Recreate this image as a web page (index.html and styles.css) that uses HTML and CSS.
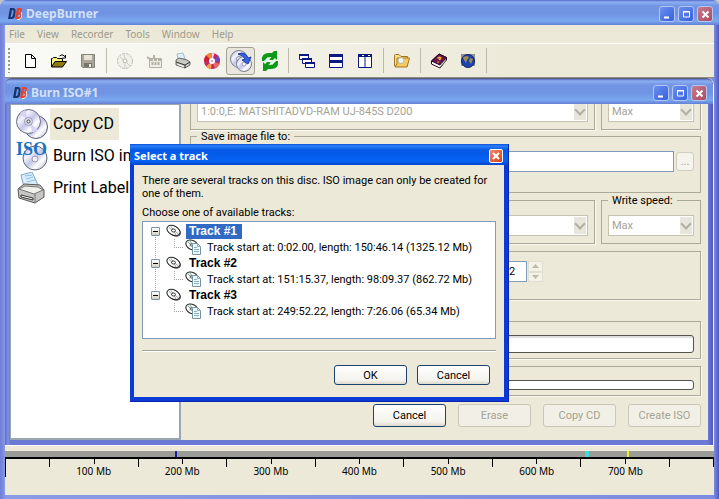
FILE: index.html
```
<!DOCTYPE html>
<html lang="en">

<head>
    <meta charset="UTF-8">
    <meta name="viewport" content="width=device-width, initial-scale=1.0">
    <title>DeepBurner</title>
    <link rel="stylesheet" href="styles.css">
</head>

<body>

    <!-- shared shapes -->
    <svg class="defs" width="0" height="0" aria-hidden="true">
        <defs>
            <linearGradient id="silver" x1="0" y1="0" x2="1" y2="1">
                <stop offset="0" stop-color="#9aa0b8" />
                <stop offset=".3" stop-color="#f4f4ff" />
                <stop offset=".5" stop-color="#c3c6e6" />
                <stop offset=".7" stop-color="#fff" />
                <stop offset="1" stop-color="#a4a8c0" />
            </linearGradient>
        </defs>
        <symbol id="logo" viewBox="0 0 15 14">
            <path d="M2 13h9l3-3V3L9 13z" fill="#fff" />
            <path fill="#14366e" fill-rule="evenodd" d="M2 1h3q3 0 2.500 4L7 9q-.5 3-3.500 3H0zm2 2L2.700 10h.8q1.200 0 1.500-2l.6-3q.3-2-1-2z" />
            <path fill="#e8402a" fill-rule="evenodd" d="M9 1h3q2.500 0 2 3-.3 1.700-1.500 2.200 1.200.8.800 2.600Q12.800 12 10 12H7zm2 2-.4 2.500h.6q1 0 1.100-1.300.1-1.200-.8-1.200zm-.8 4.200L9.700 10h.8q1 0 1.200-1.400.1-1.400-.9-1.400z" />
        </symbol>
        <symbol id="track" viewBox="0 0 16 14">
            <ellipse cx="8.500" cy="7.500" rx="7" ry="4.500" transform="rotate(28 8.500 7.500)" fill="#777" />
            <ellipse cx="7.500" cy="6.500" rx="7" ry="4.500" transform="rotate(28 7.500 6.500)" fill="#fff" stroke="#222" />
            <path d="M3 3.500 6 6M9.500 7.500l3 2.500M5 2.500l2 3M8.500 8l1.500 3" stroke="#8aa49a" />
            <ellipse cx="7.500" cy="6.500" rx="2" ry="1.500" fill="#fff" stroke="#333" />
        </symbol>
        <symbol id="trackinfo" viewBox="0 0 17 16">
            <ellipse cx="7" cy="6" rx="6.500" ry="4.500" transform="rotate(28 7 6)" fill="#fff" stroke="#222" />
            <path d="M3 3l3 2.500M5 2l2 3" stroke="#7a9a90" />
            <ellipse cx="6.500" cy="6" rx="1.500" ry="1" fill="#fff" stroke="#444" />
            <path d="M7.500 4.500h5l3 3v8h-8z" fill="#eef8fa" stroke="#7396a2" />
            <path d="M12.500 4.500v3h3M9 8.500h3M9 10.500h5M9 12.500h5" fill="none" stroke="#8cb0c2" />
        </symbol>
    </svg>

    <div class="app">
        <header class="titlebar">
            <svg class="logo" width="15" height="14"><use href="#logo" /></svg>
            <h1>DeepBurner</h1>
            <button class="cap" aria-label="Minimize"><svg width="15" height="15"><path d="M4 10.500h5" stroke="#fff" stroke-width="2" /></svg></button>
            <button class="cap" aria-label="Maximize"><svg width="15" height="15"><path d="M4.500 5h6v5h-6zM4 4.500h7" fill="none" stroke="#fff" /></svg></button>
            <button class="cap close" aria-label="Close"><svg width="15" height="15"><path d="m4.500 4.500 6 6m0-6-6 6" stroke="#fff" stroke-width="2" /></svg></button>
        </header>

        <nav class="menu">
            <a href="#">File</a>
            <a href="#">View</a>
            <a href="#">Recorder</a>
            <a href="#">Tools</a>
            <a href="#">Window</a>
            <a href="#">Help</a>
        </nav>

        <div class="toolbar">
            <span class="grip"></span>
            <button aria-label="New"><svg width="16" height="16"><path d="M3.500 1.500h6l4 4v9h-10z" fill="#fff" stroke="#000" /><path d="M9.500 1.500v4h4" fill="none" stroke="#000" /></svg></button>
            <button aria-label="Open"><svg width="18" height="16"><path d="M1.500 14V5.500h1l1-1h3l1 1h5V9" fill="#f7ef8a" stroke="#000" /><path d="M1.500 14 5 8.500h11.500L12.500 14z" fill="#8c7c10" stroke="#000" /><path d="M9.500 3q2.500-2.500 5 0l1 1.500M15.500 2v3h-3" fill="none" stroke="#000" /></svg></button>
            <button aria-label="Save" disabled><svg width="16" height="16"><path d="M1.500 1.500h13v13h-12l-1-1z" fill="#a9a79c" stroke="#85847a" /><path d="M4 2h8v5H4z" fill="#e6e3d6" /><path d="M4 10h8v4H4z" fill="#77766e" /><path d="M9 11h2v3H9z" fill="#eee" /></svg></button>
            <span class="sep"></span>
            <button aria-label="Burn disc" disabled><svg width="18" height="18"><circle cx="9" cy="9" r="7.500" fill="#f2f0ea" stroke="#bcb9af" stroke-dasharray="3 1" /><circle cx="9" cy="9" r="2" fill="#fff" stroke="#b3b0a6" /><path d="M4 5l3 2.500M8 3l1 3M11 11l3 3M9 12v4" stroke="#ccc9bf" /></svg></button>
            <button aria-label="Erase disc" disabled><svg width="18" height="16"><path d="M4.500 5.500h12v9h-12z" fill="#f0ede4" stroke="#b3b0a6" /><path d="M5 7h11M7.500 9v4M10.500 9v4M13.500 9v4M2 4l3 2M9 2v3" stroke="#b3b0a6" stroke-width="2" stroke-dasharray="3 1" /></svg></button>
            <button aria-label="Print label"><svg width="18" height="18"><path d="M4 7 3 2l6-1 2 6z" fill="#dff0fb" stroke="#9dbfd4" /><path d="m2 8 3-2 8 2 3 2v3l-5 3-9-3z" fill="#c9c9c6" stroke="#666" /><path d="m2 10 9 3 5-3M11 13v3" fill="none" stroke="#333" /><path d="M4 12.500 10 15" stroke="#fff" /></svg></button>
            <button aria-label="Disc information"><svg width="18" height="18"><circle cx="9" cy="9" r="8" fill="#c02860" /><path d="M9 9 3 3.500A8 8 0 0 1 9 1z" fill="#ef8a30" /><path d="M9 9 1 9a8 8 0 0 1 2-5.500z" fill="#d02030" /><path d="m9 9 6-5.500A8 8 0 0 1 17 10z" fill="#7a48b8" /><path d="m9 9 3 7.500A8 8 0 0 0 16.500 12z" fill="#e86868" /><path d="m9 9-6 5.500A8 8 0 0 0 8 17z" fill="#f2a04a" /><path d="M9 9V1l2.500.4z" fill="#f8d0e8" /><circle cx="9" cy="9" r="3" fill="#fff" /><circle cx="9" cy="9" r="1" fill="#b9a" /></svg></button>
            <button class="on" aria-label="Copy disc"><svg width="24" height="22"><circle cx="10" cy="9" r="8.500" fill="url(#silver)" stroke="#777c94" /><circle cx="10" cy="9" r="2.500" fill="#fff" stroke="#8a8fae" /><circle cx="15" cy="14" r="7.500" fill="url(#silver)" stroke="#777c94" /><circle cx="15" cy="14" r="2" fill="#fff" stroke="#9a9fbe" /><path d="M9 4q7-3 10 4l3-1-3 7-6-4 3-1Q14 5 9 4z" fill="#3b62dd" stroke="#1e3fb0" /></svg></button>
            <button aria-label="Refresh"><svg width="18" height="22"><path d="M1 11Q0 3 8 3h3l2-2h3v9H8l2.500-3Q5 7 5 11z" fill="#0e9a18" /><path d="M17 11q1 8-7 8H7l-2 2H2v-9h8l-2.500 3q5.500 0 5.500-4z" fill="#0e9a18" /><path d="m3 13 5-5M10 14l5-5" stroke="#e4f4e6" stroke-width="3" /></svg></button>
            <span class="sep"></span>
            <button aria-label="Cascade"><svg width="16" height="16"><g fill="#fff" stroke="#0a1a80"><path d="M.5 1.500h9v5h-9z" /><path d="M3.500 5.500h9v5h-9z" /><path d="M6.500 9.500h9v5h-9z" /><path d="M0 2h10M3 6h10M6 10h10" stroke-width="2" /></g></svg></button>
            <button aria-label="Tile horizontally"><svg width="14" height="14"><g fill="#fff" stroke="#0a1a80"><path d="M.5.500h13v13H.5z" /><path d="M0 1.500h14M0 7.500h14" stroke-width="3" /></g></svg></button>
            <button aria-label="Tile vertically"><svg width="14" height="14"><g fill="#fff" stroke="#0a1a80"><path d="M.5.500h13v13H.5zM7 0v14" /><path d="M0 1.500h14" stroke-width="3" /></g><path d="M4 1.500h2M10 1.500h2" stroke="#fff" /></svg></button>
            <span class="sep"></span>
            <button aria-label="Browse"><svg width="18" height="16"><path d="M1.500 13V2.500q0-1 1-1H6l2 2h6.500V13z" fill="#fbe08a" stroke="#a8741c" /><path d="m2 14 2-3V5h12.500L14 14z" fill="#f6cc62" stroke="#a8741c" /><circle cx="8" cy="7.500" r="3" fill="#eefaf8" stroke="#b0b8a0" /></svg></button>
            <span class="sep"></span>
            <button aria-label="Help contents"><svg width="18" height="18"><path d="M1.500 9 9 2l7.500 3.500V8L10 16l-8.500-4z" fill="#fff" stroke="#26051c" /><path d="M1.500 9 9 2l7.500 3.500L10 13z" fill="#6c1450" stroke="#26051c" /><path d="M10 13.500 16 7M10 15.500 16 8.500" stroke="#777" /><path d="M7.500 6.500q1.500-2 3-1 .5 1-1.500 2.500M8 9.500v1.200" fill="none" stroke="#f3c01c" stroke-width="1.500" /></svg></button>
            <button aria-label="Web site"><svg width="16" height="16"><path d="M1 1h14v12H1z" fill="#8d9096" /><circle cx="8" cy="8" r="6.500" fill="#1c45b4" stroke="#10255e" /><path d="m3 4 4-1 2 1-2 3-1 3-2-3zM10 5l3 1-2 5-2-3z" fill="#a08a4c" /></svg></button>
            <span class="sep"></span>
        </div>

        <div class="child">
            <header class="titlebar">
                <svg class="logo" width="15" height="14"><use href="#logo" /></svg>
                <h2>Burn ISO#1</h2>
                <button class="cap" aria-label="Minimize"><svg width="15" height="15"><path d="M4 10.500h5" stroke="#fff" stroke-width="2" /></svg></button>
                <button class="cap" aria-label="Maximize"><svg width="15" height="15"><path d="M4.500 5h6v5h-6zM4 4.500h7" fill="none" stroke="#fff" /></svg></button>
                <button class="cap close" aria-label="Close"><svg width="15" height="15"><path d="m4.500 4.500 6 6m0-6-6 6" stroke="#fff" stroke-width="2" /></svg></button>
            </header>

            <div class="work">
                <ul class="tasks">
                    <li>
                        <svg width="32" height="32"><circle cx="20" cy="19" r="11.500" fill="url(#silver)" stroke="#555a6e" /><circle cx="12.500" cy="13.500" r="12" fill="url(#silver)" stroke="#686d84" /><path d="M12.500 13.500 4 5l5-3zM12.500 13.500 17 25l5-3z" fill="#d6d2fa" /><circle cx="12.500" cy="13.500" r="4" fill="#dcdcec" stroke="#9a9db8" /><circle cx="12.500" cy="13.500" r="1.500" fill="#fff" stroke="#444" /></svg>
                        <a href="#" class="current">Copy CD</a>
                    </li>
                    <li>
                        <svg width="32" height="32"><circle cx="19" cy="18" r="12" fill="url(#silver)" stroke="#60657c" /><circle cx="19" cy="19" r="3" fill="#eee" stroke="#9a9db8" /><text class="iso" x="0" y="15">ISO</text></svg>
                        <a href="#">Burn ISO image</a>
                    </li>
                    <li>
                        <svg width="32" height="32"><path d="M8 15 5 3l11-3 6 13z" fill="#d9efff" stroke="#7fa4c4" /><path d="m9 4 7-1M10 7l7-2M11 10l8-2" stroke="#8bbbe4" /><path d="m2 17 6-5 16 1 4 5v7l-9 6L3 26z" fill="#c6c6c2" stroke="#555" /><path d="m3 17 6-3 13 1 5 3-9 4z" fill="#f0f0ec" stroke="#777" /><path d="M19 22v9" stroke="#777" /><path d="M5 23v2l12 3v-2z" fill="#fff" stroke="#333" /></svg>
                        <a href="#">Print Label</a>
                    </li>
                </ul>

                <main class="panel">
                    <div class="row">
                        <div class="group wide"><select disabled aria-label="Source drive"><option>1:0:0,E: MATSHITADVD-RAM UJ-845S D200</option></select></div>
                        <div class="group narrow"><select disabled aria-label="Read speed"><option>Max</option></select></div>
                    </div>
                    <fieldset class="group titled file">
                        <legend><label for="file">Save image file to:</label></legend>
                        <div class="filerow">
                            <input id="file" type="text">
                            <button class="browse" disabled>...</button>
                        </div>
                    </fieldset>
                    <div class="row">
                        <div class="group wide"><select disabled aria-label="Target drive"><option></option></select></div>
                        <fieldset class="group narrow titled">
                            <legend><label for="wspeed">Write speed:</label></legend>
                            <select id="wspeed" disabled><option>Max</option></select>
                        </fieldset>
                    </div>
                    <div class="group copies">
                        <input type="text" value="2" aria-label="Copies">
                        <span class="spin">
                            <button disabled aria-label="More"><svg width="7" height="4"><path d="M0 4 3.500 0 7 4z" fill="#bdbaaa" /></svg></button>
                            <button disabled aria-label="Fewer"><svg width="7" height="4"><path d="M0 0h7L3.500 4z" fill="#bdbaaa" /></svg></button>
                        </span>
                    </div>
                    <div class="group total"><div class="bar big" role="progressbar" aria-label="Progress"></div></div>
                    <div class="group"><div class="bar" role="progressbar" aria-label="Buffer"></div></div>
                    <div class="actions">
                        <button class="btn">Cancel</button>
                        <button class="btn" disabled>Erase</button>
                        <button class="btn" disabled>Copy CD</button>
                        <button class="btn" disabled>Create ISO</button>
                    </div>
                </main>
            </div>
        </div>

        <footer class="meter">
            <div class="used">
                <i class="navy" style="left: 24%"></i>
                <i class="cyan" style="left: 81.8%"></i>
                <i class="yellow" style="left: 87.7%"></i>
            </div>
            <div class="ticks">
                <i></i><i></i><i></i><i></i><i></i><i></i><i></i><i></i>
                <i></i><i></i><i></i><i></i><i></i><i></i><i></i><i></i>
            </div>
            <div class="scale">
                <span>100 Mb</span>
                <span>200 Mb</span>
                <span>300 Mb</span>
                <span>400 Mb</span>
                <span>500 Mb</span>
                <span>600 Mb</span>
                <span>700 Mb</span>
            </div>
        </footer>
    </div>

    <div class="dialog" role="dialog" aria-labelledby="dlgtitle">
        <header>
            <h2 id="dlgtitle">Select a track</h2>
            <button class="cap close" aria-label="Close"><svg width="12" height="12"><path d="m3 3 6 6m0-6-6 6" stroke="#fff" stroke-width="2" /></svg></button>
        </header>
        <div class="content">
            <p>There are several tracks on this disc. ISO image can only be created for<br>one of them.</p>
            <p class="choose">Choose one of available tracks:</p>
            <ul class="tree">
                <li>
                    <div class="node"><button class="fold" aria-label="Collapse"></button><svg width="16" height="14"><use href="#track" /></svg><b class="selected">Track #1</b></div>
                    <div class="leaf"><svg width="17" height="16"><use href="#trackinfo" /></svg><span>Track start at: 0:02.00, length: 150:46.14 (1325.12 Mb)</span></div>
                </li>
                <li>
                    <div class="node"><button class="fold" aria-label="Collapse"></button><svg width="16" height="14"><use href="#track" /></svg><b>Track #2</b></div>
                    <div class="leaf"><svg width="17" height="16"><use href="#trackinfo" /></svg><span>Track start at: 151:15.37, length: 98:09.37 (862.72 Mb)</span></div>
                </li>
                <li>
                    <div class="node"><button class="fold" aria-label="Collapse"></button><svg width="16" height="14"><use href="#track" /></svg><b>Track #3</b></div>
                    <div class="leaf"><svg width="17" height="16"><use href="#trackinfo" /></svg><span>Track start at: 249:52.22, length: 7:26.06 (65.34 Mb)</span></div>
                </li>
            </ul>
            <hr>
            <div class="buttons">
                <button class="btn">OK</button>
                <button class="btn">Cancel</button>
            </div>
        </div>
    </div>

</body>

</html>
```
FILE: styles.css
```
* {
    box-sizing: border-box;
}

body {
    margin: 0;
    background: #c4c4c4;
    font: 11px/13px Roboto, "Liberation Sans", Arial, sans-serif;
    color: #000;
}

h1,
h2,
p,
ul {
    margin: 0;
    padding: 0;
}

ul {
    list-style: none;
}

button,
input,
select {
    font: inherit;
    margin: 0;
    padding: 0;
}

button svg {
    display: block;
}

.defs {
    position: absolute;
}

/* main window */
.app {
    display: flex;
    flex-direction: column;
    height: 100vh;
    padding: 0 5px 4px;
    background: linear-gradient(90deg, #6f7dd8, #7b8ce0 3px, #8a9be6 5px, #7b8ce0 calc(100% - 5px), #5058c0);
    border-radius: 7px 7px 0 0;
    overflow: hidden;
}

.titlebar {
    display: flex;
    align-items: center;
    gap: 3px;
    flex: none;
    height: 25px;
    margin: 0 -5px;
    padding: 2px 6px 0 8px;
    background: linear-gradient(#5569c8, #8cb0f2 2px, #7295e2 6px, #7094e2 14px, #7ba8f0 21px, #6380d4);
}

.titlebar h1,
.titlebar h2 {
    flex: 1;
    font: bold 12px/18px "Noto Sans", "Open Sans", sans-serif;
    color: #d4e0f9;
}

.cap {
    display: grid;
    place-items: center;
    width: 16px;
    height: 16px;
    border: 1px solid #b4c6f4;
    border-radius: 3px;
    background: linear-gradient(135deg, #6c90ee, #3560dc);
}

.cap.close {
    background: linear-gradient(135deg, #c87c90, #a84c60);
}

.menu {
    display: flex;
    gap: 12px;
    flex: none;
    height: 19px;
    padding: 2px 4px;
    background: #ece9d8;
    border-bottom: 1px solid #fff;
}

.menu a {
    font: 10px/14px "Noto Sans", "Open Sans", sans-serif;
    color: #9c9a8c;
    text-decoration: none;
}

.toolbar {
    display: flex;
    align-items: center;
    flex: none;
    height: 34px;
    background: linear-gradient(90deg, #fafaf7, #ece9d8 75%);
    border-bottom: 1px solid #8f8d80;
}

.toolbar button {
    display: grid;
    place-items: center;
    width: 29px;
    height: 28px;
    border: 1px solid transparent;
    border-radius: 3px;
    background: none;
}

.toolbar .on {
    border-color: #a3a196;
    background: #e9e6dc;
}

.grip {
    width: 2px;
    height: 25px;
    margin: 0 5px 0 3px;
    background: repeating-linear-gradient(#9c9a8e 0 2px, transparent 2px 4px);
}

.sep {
    width: 8px;
    height: 25px;
    background: linear-gradient(#bcb9aa, #bcb9aa) center / 1px 100% no-repeat;
}

/* child window */
.child {
    flex: 1;
    display: flex;
    flex-direction: column;
    min-height: 0;
    margin-right: 1px;
    padding: 0 5px 5px;
    background: linear-gradient(90deg, #5f6cc8, #8093e4 3px, #6c79d4 5px, #6c79d4 calc(100% - 5px), #5058b8);
    border-top: 1px solid #5a5d70;
    border-radius: 7px 7px 0 0;
    overflow: hidden;
    box-shadow: 1px 0 #f8f7f0;
}

.work {
    flex: 1;
    display: flex;
    min-height: 0;
    background: #ece9d8;
}

.tasks {
    width: 171px;
    padding: 3px 5px;
    background: #fff;
    border: solid #9aa6b0;
    border-width: 1px 2px 2px 1px;
}

.tasks li {
    display: flex;
    align-items: center;
    height: 32px;
    white-space: nowrap;
}

.tasks svg {
    flex: none;
}

.tasks a {
    margin-left: 2px;
    padding: 6px 5px 6px 3px;
    font-size: 16px;
    line-height: 20px;
    color: #000;
    text-decoration: none;
}

.tasks .current {
    background: #ece9d8;
}

.iso {
    font: bold 18px "Liberation Serif", serif;
    fill: #1a72c4;
}

/* the form is scrolled to its end, so it overflows upwards */
.panel {
    flex: 1;
    display: flex;
    flex-direction: column;
    justify-content: flex-end;
    gap: 7px;
    min-width: 0;
    padding: 0 7px 13px 9px;
    overflow: hidden;
}

.row {
    display: flex;
    align-items: flex-end;
    gap: 6px;
}

.group {
    flex: none;
    min-width: 0;
    margin: 0;
    padding: 14px 6px 7px;
    border: 1px solid #aaa99a;
    box-shadow: 1px 1px #faf9f2;
}

.titled {
    margin-top: -7px;
    padding-top: 8px;
    box-shadow: none;
}

.row .wide {
    flex: 1;
}

.narrow {
    width: 100px;
}

legend {
    padding: 0 4px;
}

select {
    display: block;
    appearance: none;
    width: 100%;
    height: 21px;
    padding: 0 3px;
    border: 1px solid #c5c2b0;
    border-radius: 0;
    background: #fff linear-gradient(#e8e6dc, #e8e6dc) right 1px center / 12px 17px no-repeat;
}

select:disabled {
    color: #a5a394;
    opacity: 1;
}

.group:has(select) {
    display: grid;
}

.group select {
    grid-area: 1 / 1;
}

/* drop-down arrow */
.group:has(select)::after {
    content: "";
    grid-area: 1 / 1;
    place-self: center end;
    width: 6px;
    height: 6px;
    margin: -4px 4px 0 0;
    border: solid #b2b0a2;
    border-width: 0 2px 2px 0;
    transform: rotate(45deg);
    pointer-events: none;
}

.file {
    padding-bottom: 20px;
}

.filerow {
    display: flex;
    align-items: center;
    gap: 2px;
}

.group input {
    flex: 1;
    min-width: 0;
    height: 21px;
    border: 1px solid #7f9db9;
    background: #fff;
}

.browse {
    width: 18px;
    height: 19px;
    border: 1px solid #d0cdbc;
    border-radius: 3px;
    background: #f4f3ec;
    color: #a5a394;
}

.copies {
    display: flex;
    height: 49px;
    padding: 9px 0 0 57%;
}

.group.copies input {
    flex: none;
    width: 45px;
    padding-right: 11px;
    text-align: right;
}

.spin {
    display: grid;
    width: 15px;
    height: 21px;
    margin-left: 1px;
}

.spin button {
    display: grid;
    place-items: center;
    border: 1px solid #e2dfd0;
    background: #f3f1e8;
}

.total {
    margin-top: 14px;
}

.bar {
    height: 10px;
    border: 1px solid #55544c;
    border-radius: 3px;
    background: #fff;
}

.bar.big {
    height: 18px;
    box-shadow: inset 0 2px 1px #ddd;
}

.group:has(.bar) {
    padding: 13px 6px 5px;
}

.actions {
    display: flex;
    justify-content: flex-end;
    gap: 12px;
    margin-top: 1px;
}

.btn {
    width: 73px;
    height: 23px;
    border: 1px solid #1c4272;
    border-radius: 3px;
    background: linear-gradient(#fff, #f3f2ec 80%, #dcd8ca);
    color: #000;
}

.btn:disabled {
    border-color: #cac7b6;
    background: #f2f0e6;
    color: #a5a394;
}

/* disc usage */
.meter {
    flex: none;
    height: 50px;
    padding-top: 5px;
    background: #ece9d8;
    border-top: 1px solid #fff;
}

.used {
    position: relative;
    height: 6px;
    background: #9b9b98;
}

.used i {
    position: absolute;
    top: 0;
    width: 2px;
    height: 6px;
}

.navy {
    background: #1c1ca0;
}

.used .cyan {
    width: 4px;
    background: #40dcdc;
}

.yellow {
    background: #f4f020;
}

.ticks {
    display: flex;
    height: 8px;
    border-top: 2px solid #000;
}

.ticks i {
    flex: 1;
    height: 8px;
    border-left: 1px solid #000;
}

.ticks i:nth-child(odd) {
    height: 5px;
}

.ticks i:first-child {
    height: 18px;
}

.ticks i:last-child {
    border-right: 1px solid #000;
}

.scale {
    display: grid;
    grid-template-columns: repeat(16, 1fr);
}

.scale span {
    grid-column: span 2;
    font: 10px/13px "Noto Sans", "Open Sans", sans-serif;
    text-align: center;
}

.scale span:first-child {
    grid-column: 2 / span 2;
}

/* modal window */
.dialog {
    position: absolute;
    left: 130px;
    top: 144px;
    width: 379px;
    padding: 0 4px 4px;
    background: #0b3ad6;
    border: solid #0826a8;
    border-width: 0 1px 1px 0;
}

.dialog header {
    display: flex;
    align-items: center;
    height: 21px;
    margin: 0 -4px;
    padding: 2px 5px 0 4px;
    background: linear-gradient(#0a50d8, #2a80f8 2px, #0458e4 6px, #0562f4 17px, #0444cc);
}

.dialog h2 {
    flex: 1;
    font: bold 11px/16px "Noto Sans", "Open Sans", sans-serif;
    color: #fff;
}

.dialog .cap {
    width: 14px;
    height: 14px;
    border-color: #fff;
    border-radius: 2px;
    background: linear-gradient(135deg, #ee8a68, #d2401c);
}

.content {
    padding: 9px 8px 12px;
    background: #ece9d8;
}

.choose {
    margin-top: 6px;
}

.tree {
    height: 118px;
    margin-top: 2px;
    padding: 1px 8px;
    background: #fff;
    border: 1px solid #7f9db9;
}

.tree li {
    background: repeating-linear-gradient(#a5a5a5 0 1px, transparent 1px 2px) 4px 0 / 1px 100% no-repeat;
}

.tree li:first-child {
    background-position: 4px 8px;
}

.tree li:last-child {
    background-size: 1px 8px;
}

.node,
.leaf {
    display: flex;
    align-items: center;
    height: 16px;
}

.node svg {
    margin-left: 6px;
}

.node b {
    margin-left: 4px;
    padding: 0 5px 0 3px;
    font-family: "Liberation Sans", Arial, sans-serif;
    font-size: 12px;
    line-height: 15px;
}

.node .selected {
    background: #316ac5;
    color: #fff;
}

.fold {
    width: 9px;
    height: 9px;
    border: 1px solid #7b8ea4;
    border-radius: 1px;
    background: linear-gradient(#000, #000) center / 5px 1px no-repeat, linear-gradient(#fff, #d4d0c4);
}

.leaf {
    padding-left: 34px;
    background: repeating-linear-gradient(90deg, #a5a5a5 0 1px, transparent 1px 2px) 23px 8px / 10px 1px no-repeat, repeating-linear-gradient(#a5a5a5 0 1px, transparent 1px 2px) 23px 0 / 1px 8px no-repeat;
}

.leaf span {
    margin-left: 5px;
}

hr {
    height: 2px;
    margin: 11px 0 13px;
    border: solid #fff;
    border-width: 0 0 1px;
    background: #a5a394;
}

.buttons {
    display: flex;
    justify-content: flex-end;
    gap: 10px;
    padding-right: 6px;
}

.buttons .btn {
    height: 20px;
}
```
